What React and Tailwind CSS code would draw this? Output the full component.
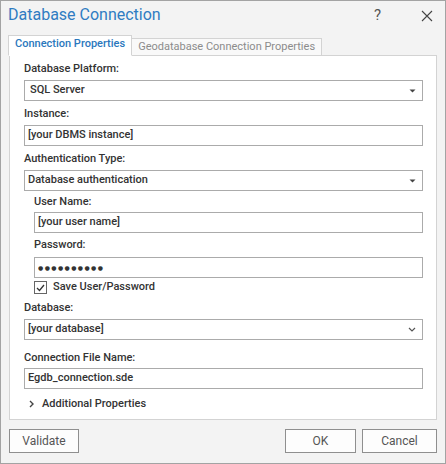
import React from "react";

const font = { fontFamily: 'Roboto, "Noto Sans", sans-serif' };

function Label({ children, className = "" }) {
  return (
    <div className={"h-[16px] leading-[16px] text-[11px] font-medium text-[#333333] " + className}>
      {children}
    </div>
  );
}

function Box({ children, className = "", arrow }) {
  return (
    <div className={"h-[21px] border border-[#ababab] bg-white flex items-center text-[11px] font-medium text-[#333333] " + className}>
      <div className="flex-1 truncate">{children}</div>
      {arrow === "tri" && (
        <svg width="7" height="4" viewBox="0 0 7 4" className="mr-[6px]">
          <path d="M0.5 0.5 L6.5 0.5 L3.5 3.5 Z" fill="#444" />
        </svg>
      )}
      {arrow === "chev" && (
        <svg width="8" height="5" viewBox="0 0 8 5" className="mr-[6px]">
          <path d="M1 1 L4 4 L7 1" fill="none" stroke="#555" strokeWidth="1.2" />
        </svg>
      )}
    </div>
  );
}

export default function App() {
  return (
    <div
      style={font}
      className="w-[446px] h-[464px] bg-[#f3f3f3] border border-[#a3a3a3] flex flex-col"
    >
      {/* title bar */}
      <div className="h-[34px] flex items-start">
        <div className="pl-[7px] pt-[2px] text-[16px] leading-[24px] text-[#2f7cc2]">
          Database Connection
        </div>
        <div className="flex-1" />
        <div className="pt-[3px] mr-[40px] text-[15px] leading-[22px] text-[#555]">?</div>
        <svg width="12" height="12" viewBox="0 0 12 12" className="mt-[9px] mr-[12px]">
          <path d="M1 1 L11 11 M11 1 L1 11" stroke="#444" strokeWidth="1.1" />
        </svg>
      </div>

      {/* tabs */}
      <div className="h-[20px] flex items-end pl-[7px] relative z-10">
        <div className="h-[21px] -mb-[1px] px-[6px] bg-white border border-[#d3d3d3] border-b-white text-[11px] leading-[16px] font-medium text-[#2b78bd]">
          Connection Properties
        </div>
        <div className="h-[17px] px-[6px] bg-[#f9f9f9] border border-l-0 border-[#d3d3d3] border-b-0 text-[11px] leading-[16px] text-[#8c8c8c]">
          Geodatabase Connection Properties
        </div>
      </div>

      {/* panel */}
      <div className="ml-[8px] w-[428px] h-[365px] bg-white border border-[#d3d3d3] pl-[14px] pr-[13px] flex flex-col">
        <Label className="mt-[5px]">Database Platform:</Label>
        <Box className="mt-[3px] pl-[5px]" arrow="tri">SQL Server</Box>
        <Label className="mt-[5px]">Instance:</Label>
        <Box className="mt-[3px] pl-[3px]">[your DBMS instance]</Box>
        <Label className="mt-[5px]">Authentication Type:</Label>
        <Box className="mt-[3px] pl-[3px]" arrow="tri">Database authentication</Box>
        <div className="pl-[10px] flex flex-col">
          <Label className="mt-[3px]">User Name:</Label>
          <Box className="mt-[2px] pl-[3px]">[your user name]</Box>
          <Label className="mt-[4px]">Password:</Label>
          <Box className="mt-[4px] pl-[3px]">
            <span
              style={{ fontFamily: '"DejaVu Sans", sans-serif' }}
              className="text-[6px] leading-[10px] tracking-[1.4px] text-[#333]"
            >
              ●●●●●●●●●●
            </span>
          </Box>
          <div className="mt-[3px] h-[13px] flex items-center">
            <div className="w-[13px] h-[13px] border border-[#666] bg-white flex items-center justify-center">
              <svg width="9" height="8" viewBox="0 0 9 8">
                <path d="M1 4 L3.5 6.5 L8 1" fill="none" stroke="#333" strokeWidth="1.3" />
              </svg>
            </div>
            <span className="ml-[6px] text-[11px] font-medium text-[#333]">Save User/Password</span>
          </div>
        </div>
        <Label className="mt-[6px]">Database:</Label>
        <Box className="mt-[3px] pl-[3px]" arrow="chev">[your database]</Box>
        <Label className="mt-[10px]">Connection File Name:</Label>
        <Box className="mt-[2px] pl-[3px]">Egdb_connection.sde</Box>
        <div className="mt-[7px] h-[16px] flex items-center pl-[5px]">
          <svg width="5" height="8" viewBox="0 0 5 8">
            <path d="M1 1 L4 4 L1 7" fill="none" stroke="#444" strokeWidth="1.4" />
          </svg>
          <span className="ml-[8px] text-[11px] font-medium text-[#333]">Additional Properties</span>
        </div>
      </div>

      {/* footer */}
      <div className="flex mt-[9px] px-[8px]">
        <button className="w-[70px] h-[24px] border border-[#8f8f8f] bg-[#fdfdfd] text-[12px] text-[#555]">
          Validate
        </button>
        <div className="flex-1" />
        <button className="w-[71px] h-[24px] border border-[#8f8f8f] bg-[#fdfdfd] text-[12px] text-[#555]">
          OK
        </button>
        <button className="ml-[6px] w-[75px] h-[24px] border border-[#8f8f8f] bg-[#fdfdfd] text-[12px] text-[#555]">
          Cancel
        </button>
      </div>
    </div>
  );
}
